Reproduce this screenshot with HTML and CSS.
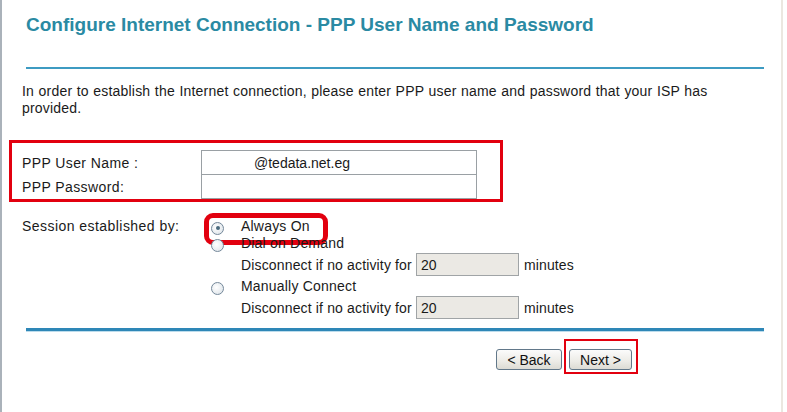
FILE: index.html
```html
<!DOCTYPE html>
<html>
<head>
<meta charset="utf-8">
<link rel="stylesheet" href="styles.css">
</head>
<body>
<div class="page">
  <h1 class="title">Configure Internet Connection - PPP User Name and Password</h1>
  <div class="rule"></div>
  <p class="intro">In order to establish the Internet connection, please enter PPP user name and password that your ISP has provided.</p>
  <div class="credbox">
    <div class="cred-label">PPP User Name :</div>
    <div class="field first"><span class="user">@tedata.net.eg</span></div>
    <div class="cred-label">PPP Password:</div>
    <div class="field"></div>
  </div>
  <div class="session">
    <div class="session-label">Session established by:</div>
    <div class="options">
      <div class="opt">
        <span class="radio checked"></span><span class="opt-text">Always On</span>
        <span class="mark"></span>
      </div>
      <div class="opt"><span class="radio"></span><span class="opt-text">Dial on Demand</span></div>
      <div class="sub"><span>Disconnect if no activity for</span><span class="minbox">20</span><span>minutes</span></div>
      <div class="opt"><span class="radio"></span><span class="opt-text">Manually Connect</span></div>
      <div class="sub"><span>Disconnect if no activity for</span><span class="minbox">20</span><span>minutes</span></div>
    </div>
  </div>
  <div class="rule thick"></div>
  <div class="buttons">
    <button class="btn back">&lt; Back</button>
    <div class="nextmark"><button class="btn next">Next &gt;</button></div>
  </div>
</div>
</body>
</html>
```
FILE: styles.css
```css
html, body {
  margin: 0;
  padding: 0;
  background: #ffffff;
}
body {
  font-family: "Liberation Sans", Arial, sans-serif;
  font-size: 14px;
  color: #1a1a1a;
}
.page {
  width: 779px;
  height: 412px;
  border-left: 2px solid #aab2ba;
  border-right: 2px solid #ebe7e0;
  box-sizing: content-box;
  overflow: hidden;
}
.title {
  margin: 0;
  padding: 13px 0 0 24px;
  font-size: 19px;
  line-height: 24px;
  font-weight: bold;
  color: #2a8aa3;
}
.rule {
  margin: 30px 0 0 24px;
  width: 738px;
  height: 2px;
  background: #3d9bc2;
}
.rule.thick {
  margin-top: 8px;
  height: 3px;
  background: #2e87b7;
  box-shadow: 0 1px 0 #bcdcec;
}
.intro {
  margin: 14px 0 0 20px;
  line-height: 17px;
  width: 700px;
  letter-spacing: 0.2px;
  word-spacing: 0.4px;
}
.credbox {
  margin: 23px 0 0 7px;
  width: 478px;
  border: 3px solid #e2000f;
  padding: 8px 0 0 10px;
  display: grid;
  grid-template-columns: 179px 276px;
  grid-auto-rows: 24px;
  align-items: center;
}
.cred-label {
  line-height: 17px;
  letter-spacing: 0.4px;
}
.field {
  height: 24px;
  box-sizing: border-box;
  border: 1px solid #9aa0a4;
  border-top: none;
  background: #fff;
  display: flex;
  align-items: center;
}
.field.first {
  border-top: 1px solid #9aa0a4;
  height: 25px;
  align-self: end;
}
.user {
  padding-left: 52px;
}
.session {
  margin: 16px 0 0 20px;
  display: flex;
}
.session-label {
  width: 183px;
  line-height: 17px;
  letter-spacing: 0.45px;
}
.options {
  display: flex;
  flex-direction: column;
}
.opt {
  position: relative;
  display: flex;
  align-items: center;
  height: 17px;
  line-height: 17px;
}
.radio {
  width: 13px;
  height: 13px;
  box-sizing: border-box;
  border: 1px solid #74889a;
  border-radius: 50%;
  background: radial-gradient(circle at 40% 40%, #ffffff, #d9e0e6);
  margin: 3px 0 0 6px;
  position: relative;
}
.radio.checked::after {
  content: "";
  position: absolute;
  left: 3.5px;
  top: 3.5px;
  width: 4px;
  height: 4px;
  border-radius: 50%;
  background: #4a6a7e;
}
.opt-text {
  margin-left: 17px;
  letter-spacing: 0.2px;
}
.mark {
  position: absolute;
  left: -1px;
  top: -5px;
  width: 124px;
  height: 32px;
  box-sizing: border-box;
  border: 5px solid #e2000f;
  border-radius: 9px;
}
.sub {
  display: flex;
  align-items: center;
  height: 25px;
  padding-left: 36px;
  gap: 4px;
  letter-spacing: 0.15px;
}
.sub + .opt {
  margin-top: 1px;
}
.minbox {
  width: 103px;
  height: 23px;
  box-sizing: border-box;
  border: 1px solid #a0a4a6;
  background: #ebe9e4;
  display: flex;
  align-items: center;
  padding-left: 4px;
  margin-right: 1px;
  letter-spacing: 0;
}
.buttons {
  display: flex;
  align-items: flex-start;
  padding-left: 494px;
  margin-top: 8px;
}
.btn {
  font-family: "Liberation Sans", Arial, sans-serif;
  font-size: 14px;
  color: #111;
  height: 21px;
  padding: 0;
  border: 1px solid #62788a;
  border-radius: 3px;
  background: linear-gradient(#fbfbfb, #ecebe6 60%, #dcdbd4);
}
.back {
  width: 66px;
  margin-top: 10px;
}
.nextmark {
  margin-left: 2px;
  border: 2px solid #e2000f;
  padding: 8px 4px 2px 3px;
}
.next {
  width: 63px;
  display: block;
}
```
